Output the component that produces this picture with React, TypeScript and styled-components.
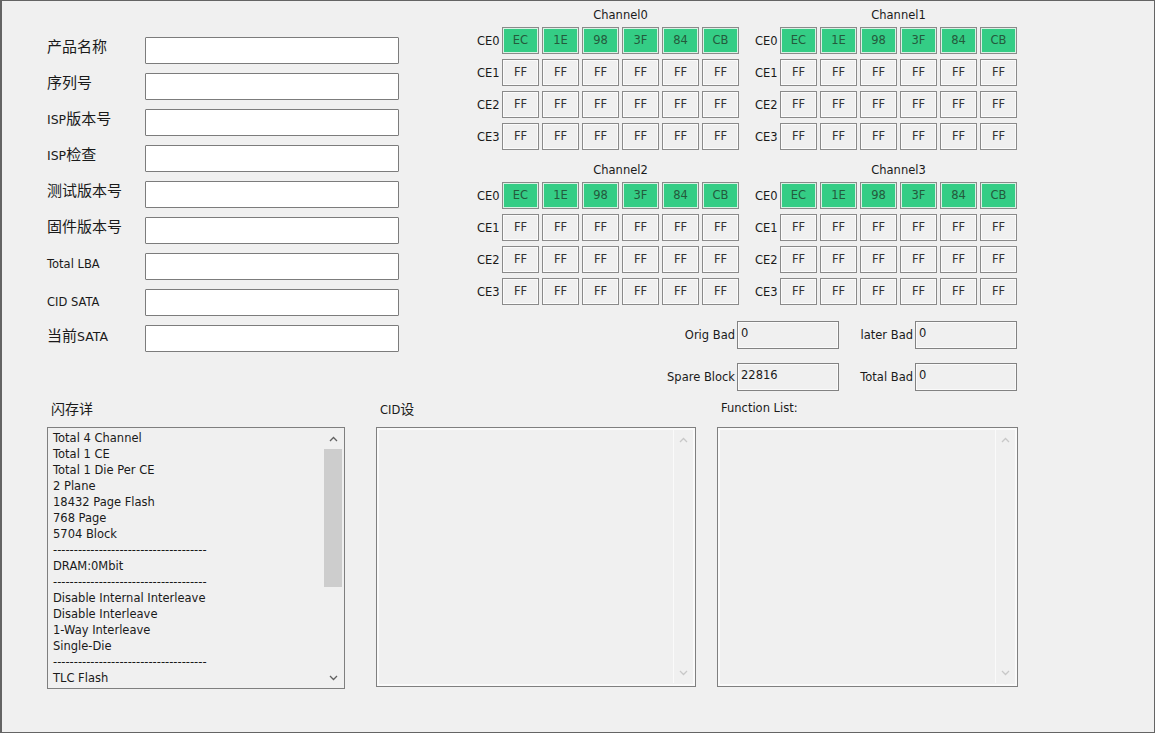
import React from "react";
import styled, { createGlobalStyle } from "styled-components";

const GlobalStyle = createGlobalStyle`
  html, body {
    margin: 0;
    padding: 0;
    background: #f0f0f0;
  }
`;

const chipIds = ["EC", "1E", "98", "3F", "84", "CB"];
const dashes = "-".repeat(37);
const flashInfo = [
  "Total 4 Channel",
  "Total 1 CE",
  "Total 1 Die Per CE",
  "2 Plane",
  "18432 Page Flash",
  "768 Page",
  "5704 Block",
  dashes,
  "DRAM:0Mbit",
  dashes,
  "Disable Internal Interleave",
  "Disable Interleave",
  "1-Way Interleave",
  "Single-Die",
  dashes,
  "TLC Flash",
];

const Chevron = ({ up, color }: { up?: boolean; color: string }) => (
  <svg width="9" height="6" viewBox="0 0 9 6">
    <polyline
      points={up ? "1,5 4.5,1.5 8,5" : "1,1 4.5,4.5 8,1"}
      fill="none"
      stroke={color}
      strokeWidth="1.3"
    />
  </svg>
);

const ScrollBar = ({ enabled }: { enabled?: boolean }) => (
  <Bar $enabled={enabled}>
    <ArrowButton>
      <Chevron up color={enabled ? "#606060" : "#c8c8c8"} />
    </ArrowButton>
    <Track>{enabled && <Thumb />}</Track>
    <ArrowButton>
      <Chevron color={enabled ? "#606060" : "#c8c8c8"} />
    </ArrowButton>
  </Bar>
);

const Channel = ({ name }: { name: string }) => (
  <ChannelBlock>
    <ChannelTitle>{name}</ChannelTitle>
    <CellGrid>
      {[0, 1, 2, 3].map((ce) => (
        <React.Fragment key={ce}>
          <CeLabel>CE{ce}</CeLabel>
          {chipIds.map((id, i) => (
            <Cell key={i} $on={ce === 0}>
              {ce === 0 ? id : "FF"}
            </Cell>
          ))}
        </React.Fragment>
      ))}
    </CellGrid>
  </ChannelBlock>
);

export default function App() {
  return (
    <>
      <GlobalStyle />
      <Window>
        <TopRow>
          <Form>
            <FormRow>
              <Label>产品名称</Label>
              <TextInput />
            </FormRow>
            <FormRow>
              <Label>序列号</Label>
              <TextInput />
            </FormRow>
            <FormRow>
              <Label>
                <Latin>ISP</Latin>版本号
              </Label>
              <TextInput />
            </FormRow>
            <FormRow>
              <Label>
                <Latin>ISP</Latin>检查
              </Label>
              <TextInput />
            </FormRow>
            <FormRow>
              <Label>测试版本号</Label>
              <TextInput />
            </FormRow>
            <FormRow>
              <Label>固件版本号</Label>
              <TextInput />
            </FormRow>
            <FormRow>
              <Label $small>Total LBA</Label>
              <TextInput />
            </FormRow>
            <FormRow>
              <Label $small $drop={4}>CID SATA</Label>
              <TextInput />
            </FormRow>
            <FormRow>
              <Label $drop={1}>
                当前<Latin>SATA</Latin>
              </Label>
              <TextInput />
            </FormRow>
          </Form>

          <ChannelColumn>
            <ChannelGrid>
              <Channel name="Channel0" />
              <Channel name="Channel1" />
              <Channel name="Channel2" />
              <Channel name="Channel3" />
            </ChannelGrid>
            <StatsGrid>
              <StatLabel>Orig Bad</StatLabel>
              <StatValue>0</StatValue>
              <StatLabel>later Bad</StatLabel>
              <StatValue>0</StatValue>
              <StatLabel>Spare Block</StatLabel>
              <StatValue>22816</StatValue>
              <StatLabel>Total Bad</StatLabel>
              <StatValue>0</StatValue>
            </StatsGrid>
          </ChannelColumn>
        </TopRow>

        <BottomRow>
          <Panel $width={298} $ml={0}>
            <PanelLabel $cjk>闪存详</PanelLabel>
            <ListBox $height={262}>
              <ListText>
                {flashInfo.map((line, i) => (
                  <ListLine key={i}>{line}</ListLine>
                ))}
              </ListText>
              <ScrollBar enabled />
            </ListBox>
          </Panel>
          <Panel $width={320} $ml={31}>
            <PanelLabel>
              CID<Cjk>设</Cjk>
            </PanelLabel>
            <ListBox $height={260} $sunken>
              <ListText />
              <ScrollBar />
            </ListBox>
          </Panel>
          <Panel $width={301} $ml={21}>
            <PanelLabel>Function List:</PanelLabel>
            <ListBox $height={260} $sunken>
              <ListText />
              <ScrollBar />
            </ListBox>
          </Panel>
        </BottomRow>
      </Window>
    </>
  );
}

const Window = styled.div`
  box-sizing: border-box;
  width: 1155px;
  height: 733px;
  border: 1px solid #646464;
  border-left-width: 2px;
  background: #f0f0f0;
  color: #1a1a1a;
  font-family: "DejaVu Sans", "Noto Sans CJK SC", sans-serif;
  font-size: 11.5px;
  display: flex;
  flex-direction: column;
  overflow: hidden;
`;

const TopRow = styled.div`
  display: flex;
  align-items: flex-start;
  height: 390px;
`;

const Form = styled.div`
  display: flex;
  flex-direction: column;
  gap: 9px;
  padding: 36px 0 0 45px;
`;

const FormRow = styled.div`
  display: flex;
  align-items: flex-start;
  height: 27px;
`;

const Label = styled.div<{ $small?: boolean; $drop?: number }>`
  width: 98px;
  padding-top: ${({ $small, $drop }) => ($drop ?? ($small ? 2 : 0))}px;
  line-height: 18px;
  font-family: ${({ $small }) =>
    $small ? `"DejaVu Sans", sans-serif` : `"Noto Sans CJK SC", sans-serif`};
  font-size: ${({ $small }) => ($small ? "11.5px" : "15px")};
  color: #1a1a1a;
  white-space: nowrap;
`;

const Latin = styled.span`
  font-family: "DejaVu Sans", sans-serif;
  font-size: 12.5px;
`;

const Cjk = styled.span`
  font-family: "Noto Sans CJK SC", sans-serif;
  font-size: 14px;
`;

const TextInput = styled.div`
  box-sizing: border-box;
  width: 254px;
  height: 27px;
  background: #ffffff;
  border: 1px solid #7c7c7c;
  border-radius: 1px;
`;

const ChannelColumn = styled.div`
  display: flex;
  flex-direction: column;
  margin-left: 78px;
  padding-top: 6px;
`;

const ChannelGrid = styled.div`
  display: grid;
  grid-template-columns: repeat(2, auto);
  column-gap: 16px;
  row-gap: 12px;
`;

const ChannelBlock = styled.div`
  display: flex;
  flex-direction: column;
`;

const ChannelTitle = styled.div`
  margin-left: 25px;
  width: 237px;
  height: 16px;
  line-height: 16px;
  margin-bottom: 4px;
  text-align: center;
`;

const CellGrid = styled.div`
  display: grid;
  grid-template-columns: 22px repeat(6, 37px);
  grid-auto-rows: 27px;
  column-gap: 3px;
  row-gap: 5px;
`;

const CeLabel = styled.div`
  display: flex;
  align-items: center;
  padding-top: 1px;
  white-space: nowrap;
`;

const Cell = styled.div<{ $on: boolean }>`
  box-sizing: border-box;
  display: flex;
  align-items: center;
  justify-content: center;
  padding-bottom: 1px;
  border: 1px solid #8a8a8a;
  background: ${({ $on }) => ($on ? "#34cd85" : "#f0f0f0")};
  box-shadow: inset 0 0 0 1px ${({ $on }) => ($on ? "#d8f3e4" : "#fbfbfb")};
  color: ${({ $on }) => ($on ? "#245a3c" : "#333333")};
`;

const StatsGrid = styled.div`
  display: grid;
  grid-template-columns: auto 102px 72px 102px;
  column-gap: 2px;
  row-gap: 14px;
  justify-content: end;
  margin-top: 16px;
`;

const StatLabel = styled.div`
  justify-self: end;
  align-self: center;
  white-space: nowrap;
`;

const StatValue = styled.div`
  box-sizing: border-box;
  height: 28px;
  padding: 4px 3px 0;
  background: #f0f0f0;
  border: 1px solid #828282;
  box-shadow: inset 0 0 0 1px #fafafa;
`;

const BottomRow = styled.div`
  display: flex;
  align-items: flex-start;
  padding-left: 45px;
  margin-top: 8px;
`;

const Panel = styled.div<{ $width: number; $ml: number }>`
  display: flex;
  flex-direction: column;
  width: ${({ $width }) => $width}px;
  margin-left: ${({ $ml }) => $ml}px;
`;

const PanelLabel = styled.div<{ $cjk?: boolean }>`
  height: 18px;
  line-height: 18px;
  padding-left: 4px;
  margin-bottom: 10px;
  font-family: ${({ $cjk }) =>
    $cjk ? `"Noto Sans CJK SC", sans-serif` : `"DejaVu Sans", "Noto Sans CJK SC", sans-serif`};
  font-size: ${({ $cjk }) => ($cjk ? "14px" : "11.5px")};
`;

const ListBox = styled.div<{ $height: number; $sunken?: boolean }>`
  box-sizing: border-box;
  display: flex;
  height: ${({ $height }) => $height}px;
  padding: ${({ $sunken }) => ($sunken ? "1px 3px 3px 1px" : "0 1px 0 0")};
  background: #f0f0f0;
  border: 1px solid #7f7f7f;
  box-shadow: ${({ $sunken }) => ($sunken ? "inset 0 0 0 2px #fafafa" : "none")};
`;

const ListText = styled.div`
  flex: 1;
  padding: 2px 0 0 5px;
  overflow: hidden;
`;

const ListLine = styled.div`
  height: 16px;
  line-height: 16px;
  white-space: pre;
`;

const Bar = styled.div<{ $enabled?: boolean }>`
  display: flex;
  flex-direction: column;
  width: ${({ $enabled }) => ($enabled ? "20px" : "18px")};
  border-left: 1px solid ${({ $enabled }) => ($enabled ? "#f0f0f0" : "#fafafa")};
`;

const ArrowButton = styled.div`
  display: flex;
  align-items: center;
  justify-content: center;
  height: 21px;
`;

const Track = styled.div`
  flex: 1;
  display: flex;
  flex-direction: column;
`;

const Thumb = styled.div`
  height: 138px;
  margin: 0 1px;
  background: #cdcdcd;
`;
